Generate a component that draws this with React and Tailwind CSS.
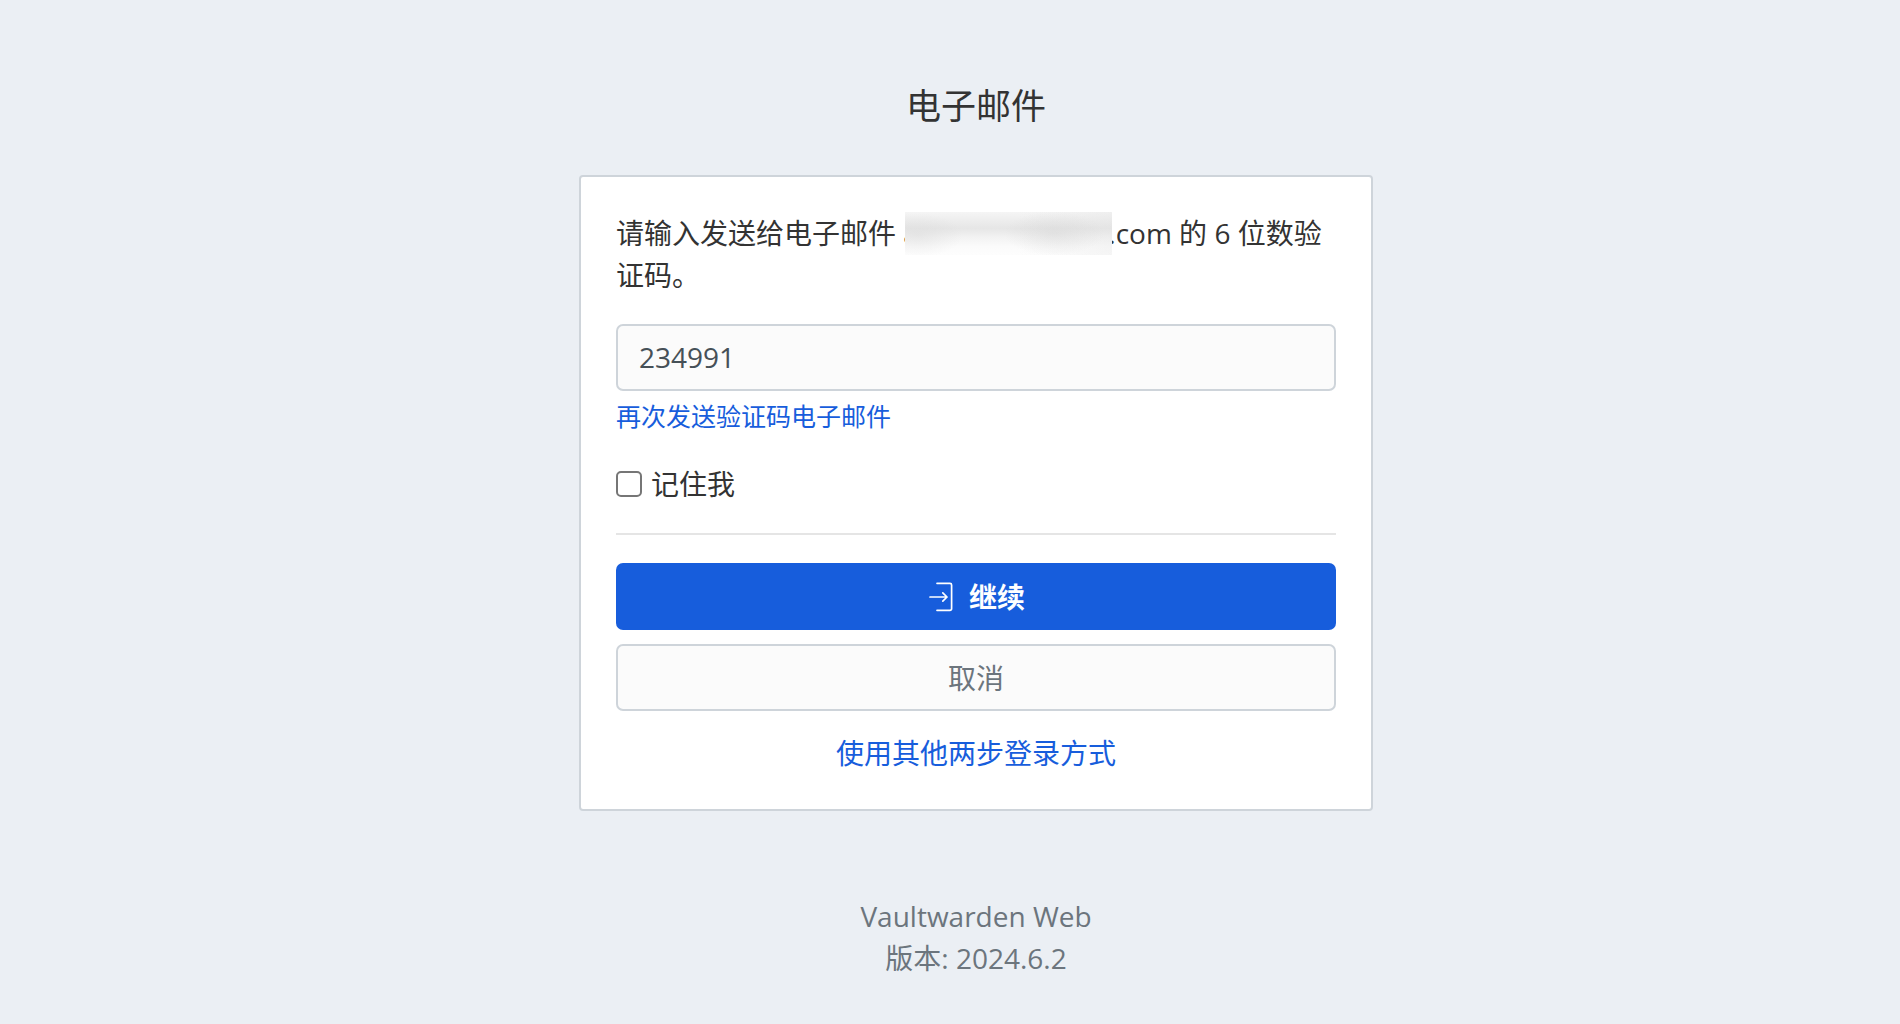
import React, { useState } from "react";

const LoginIcon = () => (
  <svg
    viewBox="0 0 24 30"
    className="w-6 h-[30px]"
    fill="none"
    stroke="currentColor"
    strokeWidth="1.7"
    strokeLinecap="round"
    strokeLinejoin="round"
    aria-hidden="true"
  >
    <path d="M8 1.3h13a1.6 1.6 0 0 1 1.6 1.6v23.8a1.6 1.6 0 0 1-1.6 1.6H8" />
    <path d="M1 15h17M13.8 10.8l4.2 4.2-4.2 4.2" />
  </svg>
);

// Email address with everything before the domain suffix hidden
const MaskedEmail = () => (
  <>
    <span className="relative inline-block w-[205px] h-[42px] align-top">
      a
      <span className="absolute top-0 left-0.5 w-[207px] h-[43px] bg-[radial-gradient(ellipse_50px_22px_at_72%_50%,#d4d4d470,transparent),radial-gradient(ellipse_45px_22px_at_6%_54%,#d8d8d870,transparent),linear-gradient(to_right,transparent_55%,#dedede40),linear-gradient(to_bottom,#f5f5f5,#e6e6e6_38%,#f2f2f2_58%,#fbfbfb_80%,#fdfdfd)]" />
    </span>
    .com
  </>
);

const App = () => {
  const [code, setCode] = useState("234991");
  const [remember, setRemember] = useState(false);

  return (
    <div className="min-h-screen bg-[#ebeff4] pt-20 pl-[52px] text-[28px] leading-[42px] text-[#333333] font-['Open_Sans','Noto_Sans_CJK_SC',sans-serif]">
      <main className="w-full max-w-[794px] mx-auto">
        <h1 className="mb-[43px] text-center text-[35px] leading-[52px]">
          电子邮件
        </h1>

        <form
          className="p-[35px] bg-white border-2 border-[#ced4da] rounded"
          onSubmit={(e) => e.preventDefault()}
        >
          <label htmlFor="code" className="block">
            请输入发送给电子邮件 <MaskedEmail /> 的 6 位数验证码。
          </label>
          <input
            id="code"
            type="text"
            inputMode="numeric"
            value={code}
            onChange={(e) => setCode(e.target.value)}
            className="block w-full h-[67px] mt-7 px-[21px] pb-0.5 bg-[#fbfbfb] border-2 border-[#ced4da] rounded-[7px] text-[#465057] outline-none"
          />
          <a
            href="#resend"
            className="block w-fit mt-1.5 text-[25px] leading-[38px] text-[#175ddc] hover:underline"
          >
            再次发送验证码电子邮件
          </a>

          <div className="flex items-center gap-[9px] mt-7">
            <input
              id="remember"
              type="checkbox"
              checked={remember}
              onChange={(e) => setRemember(e.target.checked)}
              className="appearance-none w-[26px] h-[26px] bg-white border-2 border-[#767676] rounded-[5px] checked:bg-[#175ddc]"
            />
            <label htmlFor="remember">记住我</label>
          </div>

          <hr className="mt-7 mb-7 border-t-2 border-[#e5e5e5]" />

          <button
            type="submit"
            className="flex items-center justify-center gap-4 w-full h-[67px] pl-0.5 bg-[#175ddc] rounded-[7px] font-bold text-white cursor-pointer hover:bg-[#134eb9]"
          >
            <LoginIcon />
            继续
          </button>
          <button
            type="button"
            className="block w-full h-[67px] mt-3.5 bg-[#fbfbfb] border-2 border-[#ced4da] rounded-[7px] text-[#6c757d] cursor-pointer hover:bg-gray-100"
          >
            取消
          </button>
          <a
            href="#methods"
            className="block w-fit mt-[21px] mx-auto text-[#175ddc] hover:underline"
          >
            使用其他两步登录方式
          </a>
        </form>

        <footer className="mt-[84px] text-center text-[#6c757d]">
          <p>Vaultwarden Web</p>
          <p>版本: 2024.6.2</p>
        </footer>
      </main>
    </div>
  );
};

export default App;
